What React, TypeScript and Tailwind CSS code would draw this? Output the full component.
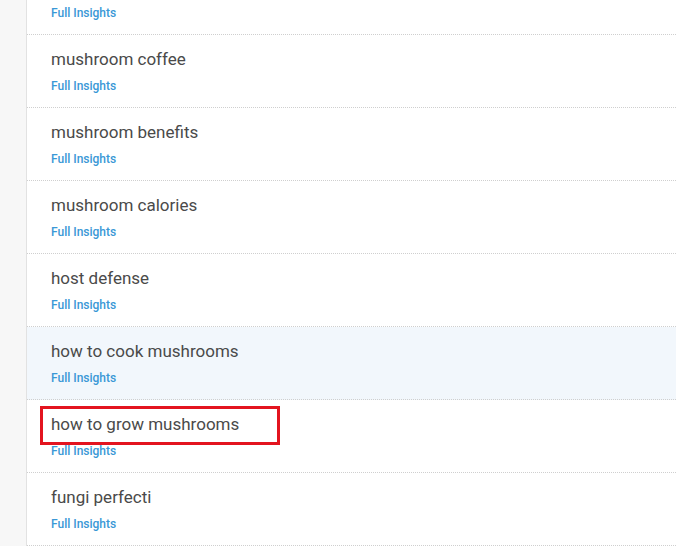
import React from "react";

const rows = [
  { t: "", hl: false },
  { t: "mushroom coffee", hl: false },
  { t: "mushroom benefits", hl: false },
  { t: "mushroom calories", hl: false },
  { t: "host defense", hl: false },
  { t: "how to cook mushrooms", hl: true },
  { t: "how to grow mushrooms", hl: false, box: true },
  { t: "fungi perfecti", hl: false },
];

export default function App() {
  return (
    <div
      className="flex h-[546px] w-[676px] overflow-hidden bg-white"
      style={{ fontFamily: "Roboto, 'Liberation Sans', sans-serif" }}
    >
      <div className="w-[27px] shrink-0 border-r border-[#e2e2e2] bg-[#f7f7f7]" />
      <div className="flex-1 -mt-[38px]">
        {rows.map((r, i) => (
          <div
            key={i}
            className={`relative h-[73px] border-b border-dotted border-[#cfcfcf] pl-[24px] pt-[13px] ${
              r.hl ? "bg-[#f2f7fc]" : "bg-white"
            }`}
          >
            <div className="h-[22px] text-[17px] leading-[22px] text-[#4a4a4a]">{r.t}</div>
            <div className="mt-[8px] text-[12px] font-medium leading-[16px] text-[#3a98d6]">
              Full Insights
            </div>
            {r.box && (
              <div className="absolute left-[13px] top-[6px] h-[39px] w-[240px] border-[3px] border-[#e3141f]" />
            )}
          </div>
        ))}
      </div>
    </div>
  );
}
